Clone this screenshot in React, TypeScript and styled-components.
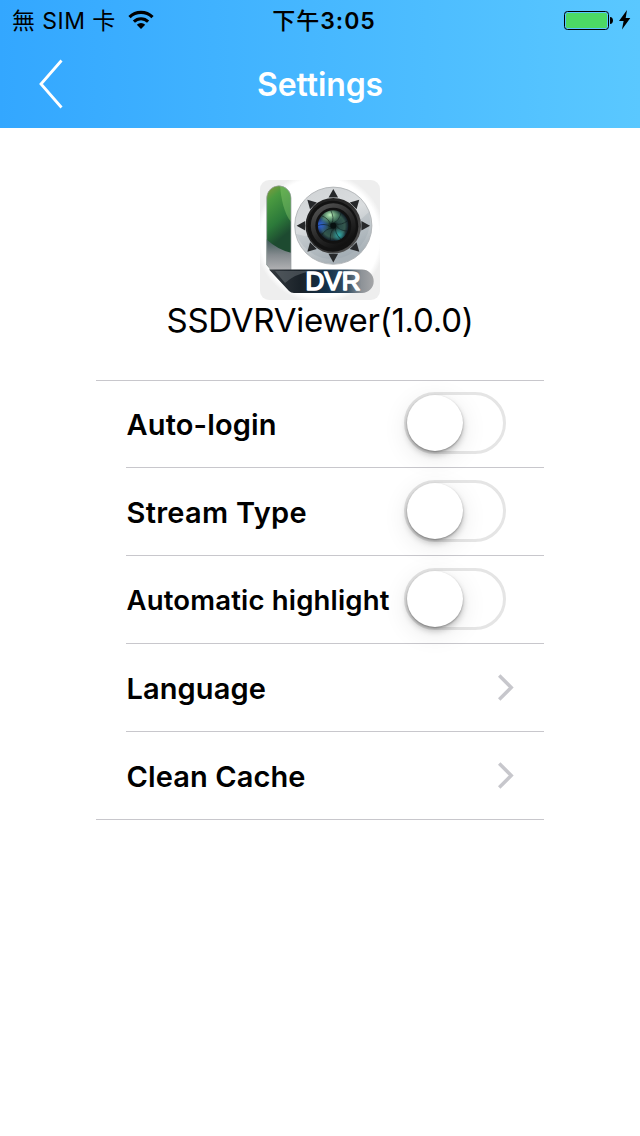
import React, { useState } from 'react';
import styled, { createGlobalStyle } from 'styled-components';

interface LabelProps {
  $size?: number;
  $spacing?: number;
}

interface RowProps {
  $last?: boolean;
}

const GlobalStyle = createGlobalStyle`
  * {
    box-sizing: border-box;
  }

  body {
    margin: 0;
    background: #ffffff;
    color: #000000;
    font-family: Inter, 'Noto Sans CJK TC', sans-serif;
  }
`;

const Screen = styled.div`
  display: flex;
  flex-direction: column;
  width: 640px;
  height: 1136px;
  background: #ffffff;
  overflow: hidden;
`;

const Header = styled.header`
  height: 128px;
  background: linear-gradient(90deg, #33a7ff 0%, #5ac8ff 100%);
`;

const StatusBar = styled.div`
  display: grid;
  grid-template-columns: 1fr auto 1fr;
  align-items: center;
  height: 40px;
  padding: 0 9px 0 12px;
`;

const Carrier = styled.div`
  display: flex;
  align-items: center;
  gap: 12px;
  font-size: 23px;
  line-height: 38px;
  letter-spacing: 0.45px;
  white-space: nowrap;
`;

const CarrierName = styled.span`
  padding-top: 2px;
`;

const Clock = styled.div`
  padding: 2px 0 0 5px;
  font-size: 23px;
  font-weight: 600;
  line-height: 38px;
  letter-spacing: 1px;
`;

const ClockPrefix = styled.span`
  font-weight: 500;
`;

const Power = styled.div`
  display: flex;
  align-items: center;
  justify-content: flex-end;
  gap: 5px;
`;

const NavBar = styled.nav`
  display: grid;
  grid-template-columns: 100px 1fr 100px;
  align-items: center;
  height: 88px;
`;

const BackButton = styled.button`
  display: flex;
  padding: 0 0 0 38px;
  border: none;
  background: none;
`;

const Title = styled.h1`
  margin: 0;
  padding-top: 2px;
  color: #ffffff;
  font-size: 32px;
  font-weight: 600;
  line-height: 86px;
  letter-spacing: -0.1px;
  text-align: center;
`;

const About = styled.section`
  display: flex;
  flex-direction: column;
  align-items: center;
  height: 252px;
  padding-top: 52px;
`;

const AppName = styled.div`
  font-size: 33px;
  line-height: 40px;
  letter-spacing: -0.26px;
`;

const List = styled.ul`
  width: 448px;
  margin: 0 auto;
  padding: 0 0 0 30px;
  list-style: none;
  border-top: 1px solid #c8c7cc;
  border-bottom: 1px solid #c8c7cc;
`;

const Row = styled.li<RowProps>`
  display: flex;
  align-items: center;
  justify-content: space-between;
  height: ${({ $last }) => ($last ? 87 : 88)}px;
  padding-right: 29px;
  border-bottom: ${({ $last }) => ($last ? 'none' : '1px solid #c8c7cc')};

  &:first-child {
    height: 87px;
  }
`;

const Label = styled.span<LabelProps>`
  padding: ${({ $size = 29 }) => ($size < 29 ? 0 : 2)}px 0 0 0.5px;
  font-size: ${({ $size = 29 }) => $size}px;
  font-weight: 600;
  line-height: 40px;
  letter-spacing: ${({ $spacing = 0.1 }) => $spacing}px;
  white-space: nowrap;
`;

const Track = styled.button<{ $on: boolean }>`
  flex: none;
  width: 102px;
  height: 62px;
  margin: 0 9px 2px 0;
  padding: 0;
  border: 3px solid ${({ $on }) => ($on ? '#4cd964' : '#e5e5e5')};
  border-radius: 31px;
  background: ${({ $on }) => ($on ? '#4cd964' : '#ffffff')};
`;

const Knob = styled.span<{ $on: boolean }>`
  display: block;
  width: 56px;
  height: 56px;
  margin-left: ${({ $on }) => ($on ? 40 : 0)}px;
  border-radius: 50%;
  background: #ffffff;
  box-shadow: 0 4px 6px rgba(0, 0, 0, 0.22), 0 1px 2px rgba(0, 0, 0, 0.3), 0 6px 26px rgba(0, 0, 0, 0.1);
`;

const WifiIcon = () => (
  <svg width="26" height="20" viewBox="0 0 26 20">
    <path d="M1.5 7.1a16.5 16.5 0 0 1 23 0" fill="none" stroke="#000" strokeWidth="3.2" />
    <path d="M5.9 11.6a10 10 0 0 1 14.2 0" fill="none" stroke="#000" strokeWidth="3" />
    <path d="M13 19l-4.2-4.3a6 6 0 0 1 8.4 0z" />
  </svg>
);

const BatteryIcon = () => (
  <svg width="50" height="20" viewBox="0 0 50 20">
    <rect x="0.5" y="1.5" width="44" height="18" rx="3" fill="none" stroke="#000" />
    <rect x="2" y="3" width="41" height="15" rx="1.5" fill="#4cd964" />
    <path d="M46 7c4 0 4 7 0 7z" />
  </svg>
);

const BoltIcon = () => (
  <svg width="12" height="20" viewBox="0 0 12 20">
    <path d="M8 0L0 11h4.6L3 19.5 11.3 8H6.7z" />
  </svg>
);

const BackIcon = () => (
  <svg width="28" height="52" viewBox="0 0 28 52">
    <path d="M23.5 2.5L3 26l20.5 23.5" fill="none" stroke="#fff" strokeWidth="2.8" />
  </svg>
);

const ChevronIcon = () => (
  <svg width="17" height="27" viewBox="0 0 17 27">
    <path d="M1.2 1.5l12 12-12 12" fill="none" stroke="#c7c7cc" strokeWidth="3.5" />
  </svg>
);

const AppIcon = () => (
  <svg width="120" height="120" viewBox="0 0 120 120">
    <defs>
      <radialGradient id="plate" cx="0.5" cy="0.48" r="0.62">
        <stop offset="0.8" stopColor="#fff" />
        <stop offset="0.88" stopColor="#eee" />
      </radialGradient>
      <linearGradient id="bar" x1="0" y1="0" x2="0.25" y2="1">
        <stop offset="0" stopColor="#8f9a3c" />
        <stop offset="0.2" stopColor="#4a9a40" />
        <stop offset="0.5" stopColor="#2c7a3a" />
        <stop offset="0.72" stopColor="#1d4a30" />
      </linearGradient>
      <linearGradient id="barFoot" x1="0" y1="0" x2="0" y2="1">
        <stop offset="0" stopColor="#3b5654" />
        <stop offset="0.5" stopColor="#858b8f" />
        <stop offset="1" stopColor="#b4b4b6" />
      </linearGradient>
      <linearGradient id="band" x1="0" y1="0" x2="1" y2="0">
        <stop offset="0" stopColor="#33393e" />
        <stop offset="0.3" stopColor="#1a2229" />
        <stop offset="0.55" stopColor="#123049" />
        <stop offset="0.75" stopColor="#344f63" />
        <stop offset="0.88" stopColor="#8d9297" />
        <stop offset="1" stopColor="#a5a6a8" />
      </linearGradient>
      <linearGradient id="dial" x1="0" y1="0" x2="0.4" y2="1">
        <stop offset="0" stopColor="#cfd2d4" />
        <stop offset="0.5" stopColor="#dadddf" />
        <stop offset="1" stopColor="#a9b2b8" />
      </linearGradient>
      <linearGradient id="housing" x1="0" y1="0" x2="1" y2="1">
        <stop offset="0" stopColor="#1b1b1b" />
        <stop offset="0.5" stopColor="#2c2c2c" />
        <stop offset="1" stopColor="#606060" />
      </linearGradient>
      <linearGradient id="ring" x1="0" y1="0" x2="0.6" y2="1">
        <stop offset="0" stopColor="#5a5a5a" />
        <stop offset="0.6" stopColor="#2a2a2a" />
        <stop offset="1" stopColor="#111" />
      </linearGradient>
      <radialGradient id="glass" cx="0.5" cy="0.5" r="0.5">
        <stop offset="0" stopColor="#0b1414" />
        <stop offset="0.4" stopColor="#2a4c48" />
        <stop offset="0.75" stopColor="#35584f" />
        <stop offset="1" stopColor="#101a26" />
      </radialGradient>
      <radialGradient id="blueGlow" cx="0.5" cy="0.5" r="0.5">
        <stop offset="0" stopColor="#2d62e0" />
        <stop offset="1" stopColor="#2d62e0" stopOpacity="0" />
      </radialGradient>
      <radialGradient id="greenGlow" cx="0.5" cy="0.5" r="0.5">
        <stop offset="0" stopColor="#c4f5c0" />
        <stop offset="1" stopColor="#58b070" stopOpacity="0" />
      </radialGradient>
      <radialGradient id="cyanGlow" cx="0.5" cy="0.5" r="0.5">
        <stop offset="0" stopColor="#2fa8a8" />
        <stop offset="1" stopColor="#2fa8a8" stopOpacity="0" />
      </radialGradient>
      <clipPath id="barClip">
        <path d="M6.7 18a12.1 12.1 0 0 1 24.3 0v72H11l-4.3-5z" />
      </clipPath>
      <clipPath id="glassClip">
        <circle cx="73.3" cy="45.7" r="15.4" />
      </clipPath>
    </defs>
    <rect width="120" height="120" rx="9" fill="url(#plate)" />
    <g clipPath="url(#barClip)">
      <rect x="6" y="5" width="26" height="86" fill="url(#bar)" />
      <path d="M20 5c1 14 4 28 11 37V5z" fill="#8fcf70" opacity="0.4" />
      <path d="M6 59q12 11 26 14v18H6z" fill="url(#barFoot)" />
    </g>
    <path d="M6.7 85V18a12.1 12.1 0 0 1 24.3 0v72" fill="none" stroke="#9a9fa0" strokeWidth="0.7" />
    <path d="M9 89.5h93a11.7 11.7 0 0 1 0 23.4H34q-3 0-5-2z" fill="url(#band)" />
    <path d="M15 91h36q-16 3-26 12z" fill="#7c848a" opacity="0.4" />
    <circle cx="73.3" cy="45.7" r="38.6" fill="url(#dial)" stroke="#a9adb0" strokeWidth="0.8" />
    <path d="M36 54q38 12 73-22a38.2 38.2 0 0 1-73 22z" fill="#8e9aa2" opacity="0.22" />
    <g fill="#26282a">
      {[0, 45, 90, 135, 180, 225, 270, 315].map(angle => (
        <path key={angle} d="M73.3 9l4.8 8.6h-9.6z" transform={`rotate(${angle} 73.3 45.7)`} />
      ))}
    </g>
    <circle cx="73.3" cy="45.7" r="27.8" fill="url(#housing)" />
    <circle cx="72.8" cy="46.2" r="25.5" fill="#121212" />
    <circle cx="73.3" cy="45.7" r="22.5" fill="url(#ring)" />
    <circle cx="73.3" cy="45.7" r="18" fill="#111" />
    <g clipPath="url(#glassClip)">
      <circle cx="73.3" cy="45.7" r="15.4" fill="url(#glass)" />
      <circle cx="60" cy="45" r="9" fill="url(#blueGlow)" />
      <ellipse cx="70" cy="35" rx="12" ry="9" fill="url(#greenGlow)" />
      <circle cx="79" cy="55" r="7" fill="url(#cyanGlow)" />
      <g fill="none" stroke="#0d1a1c" strokeWidth="0.9" opacity="0.6">
        {[0, 40, 80, 120, 160, 200, 240, 280, 320].map(angle => (
          <path key={angle} d="M73.3 43q6-2 8-11" transform={`rotate(${angle} 73.3 45.7)`} />
        ))}
      </g>
      <circle cx="73.3" cy="45.7" r="3" fill="#071010" />
    </g>
    <text
      x="45.5"
      y="110.4"
      textLength="55"
      lengthAdjust="spacingAndGlyphs"
      fill="#fff"
      stroke="#fff"
      strokeWidth="1.6"
      strokeLinejoin="round"
      fontFamily="Liberation Sans, sans-serif"
      fontSize="25"
    >
      DVR
    </text>
  </svg>
);

const Switch = () => {
  const [on, setOn] = useState(false);

  return (
    <Track $on={on} role="switch" aria-checked={on} onClick={() => setOn(!on)}>
      <Knob $on={on} />
    </Track>
  );
};

const App: React.FC = () => {
  return (
    <>
      <GlobalStyle />
      <Screen>
        <Header>
          <StatusBar>
            <Carrier>
              <CarrierName>無 SIM 卡</CarrierName>
              <WifiIcon />
            </Carrier>
            <Clock>
              <ClockPrefix>下午</ClockPrefix>3:05
            </Clock>
            <Power>
              <BatteryIcon />
              <BoltIcon />
            </Power>
          </StatusBar>
          <NavBar>
            <BackButton>
              <BackIcon />
            </BackButton>
            <Title>Settings</Title>
          </NavBar>
        </Header>
        <About>
          <AppIcon />
          <AppName>SSDVRViewer(1.0.0)</AppName>
        </About>
        <List>
          <Row>
            <Label $spacing={0.15}>Auto-login</Label>
            <Switch />
          </Row>
          <Row>
            <Label $spacing={0.3}>Stream Type</Label>
            <Switch />
          </Row>
          <Row>
            <Label $size={27.5} $spacing={0.18}>Automatic highlight</Label>
            <Switch />
          </Row>
          <Row>
            <Label>Language</Label>
            <ChevronIcon />
          </Row>
          <Row $last>
            <Label>Clean Cache</Label>
            <ChevronIcon />
          </Row>
        </List>
      </Screen>
    </>
  );
};

export default App;
